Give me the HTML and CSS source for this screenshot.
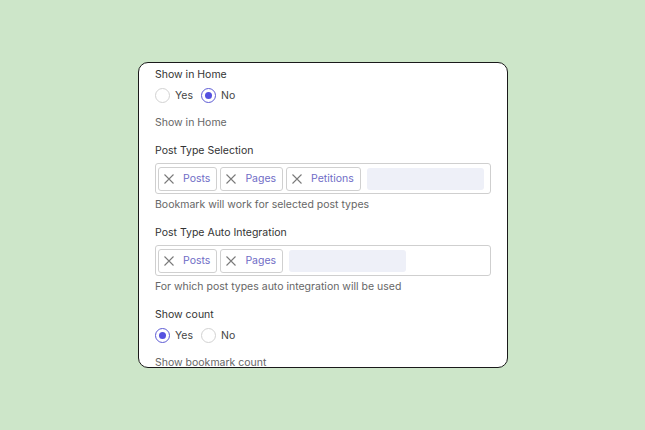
FILE: index.html
```html
<!DOCTYPE html>
<html>
<head>
<meta charset="utf-8">
<link rel="stylesheet" href="styles.css">
</head>
<body>
<div class="card">
  <div class="field">
    <div class="label">Show in Home</div>
    <div class="radios">
      <span class="radio"><span class="dot"></span>Yes</span>
      <span class="radio"><span class="dot on"></span>No</span>
    </div>
    <div class="desc desc-radio">Show in Home</div>
  </div>
  <div class="field">
    <div class="label">Post Type Selection</div>
    <div class="tagbox">
      <span class="tag"><span class="x"><svg width="10" height="10" viewBox="0 0 10 10"><path d="M0.5 0.5L9.5 9.5M9.5 0.5L0.5 9.5" stroke="#7a7a7a" stroke-width="1.1"/></svg></span>Posts</span>
      <span class="tag"><span class="x"><svg width="10" height="10" viewBox="0 0 10 10"><path d="M0.5 0.5L9.5 9.5M9.5 0.5L0.5 9.5" stroke="#7a7a7a" stroke-width="1.1"/></svg></span>Pages</span>
      <span class="tag"><span class="x"><svg width="10" height="10" viewBox="0 0 10 10"><path d="M0.5 0.5L9.5 9.5M9.5 0.5L0.5 9.5" stroke="#7a7a7a" stroke-width="1.1"/></svg></span>Petitions</span>
      <span class="input"></span>
    </div>
    <div class="desc">Bookmark will work for selected post types</div>
  </div>
  <div class="field">
    <div class="label">Post Type Auto Integration</div>
    <div class="tagbox">
      <span class="tag"><span class="x"><svg width="10" height="10" viewBox="0 0 10 10"><path d="M0.5 0.5L9.5 9.5M9.5 0.5L0.5 9.5" stroke="#7a7a7a" stroke-width="1.1"/></svg></span>Posts</span>
      <span class="tag"><span class="x"><svg width="10" height="10" viewBox="0 0 10 10"><path d="M0.5 0.5L9.5 9.5M9.5 0.5L0.5 9.5" stroke="#7a7a7a" stroke-width="1.1"/></svg></span>Pages</span>
      <span class="input"></span>
    </div>
    <div class="desc">For which post types auto integration will be used</div>
  </div>
  <div class="field">
    <div class="label">Show count</div>
    <div class="radios">
      <span class="radio"><span class="dot on"></span>Yes</span>
      <span class="radio"><span class="dot"></span>No</span>
    </div>
    <div class="desc desc-radio">Show bookmark count</div>
  </div>
</div>
</body>
</html>
```
FILE: styles.css
```css
html, body { margin: 0; padding: 0; }
body {
  background: #cde6c9;
  width: 645px;
  height: 430px;
  font-family: Inter, "Noto Sans", sans-serif;
  font-size: 10.5px;
  color: #3a3a3a;
}
.card {
  margin: 62px 0 0 138px;
  width: 370px;
  height: 306px;
  background: #fff;
  border: 1.5px solid #1a1a1a;
  border-radius: 10px;
  overflow: hidden;
  box-sizing: border-box;
  padding: 4px 16px 0 16px;
}
.field { display: flex; flex-direction: column; }
.label { height: 16px; line-height: 16px; color: #333; }
.radios { display: flex; gap: 8px; margin-top: 3px; height: 18px; align-items: center; }
.radio { display: flex; align-items: center; gap: 5px; color: #444; }
.dot {
  width: 15px; height: 15px; box-sizing: border-box;
  border: 1px solid #d2d2d2; border-radius: 50%;
  display: inline-flex; align-items: center; justify-content: center;
}
.dot.on { border-color: #5d5bd4; }
.dot.on::after { content: ""; width: 7px; height: 7px; border-radius: 50%; background: #5551e0; }
.desc { color: #666; height: 16px; line-height: 16px; margin-top: 3px; margin-bottom: 12px; }
.desc.desc-radio { margin-top: 11px; }
.tagbox {
  margin-top: 4px;
  display: flex; gap: 3px; align-items: center;
  border: 1px solid #cfcfcf; border-radius: 3px;
  height: 31px; box-sizing: border-box; padding: 0 6px 0 2px;
}
.tag {
  display: flex; align-items: center; height: 24px; box-sizing: border-box;
  border: 1px solid #d0d0d0; border-radius: 3px;
  padding: 0 6px 0 5px; color: #6f6cc6; gap: 9px;
  flex: none;
}
.x { display: flex; }
.input { flex: none; width: 117px; height: 22px; background: #eef0f8; border-radius: 3px; margin-left: 3px; }
```
